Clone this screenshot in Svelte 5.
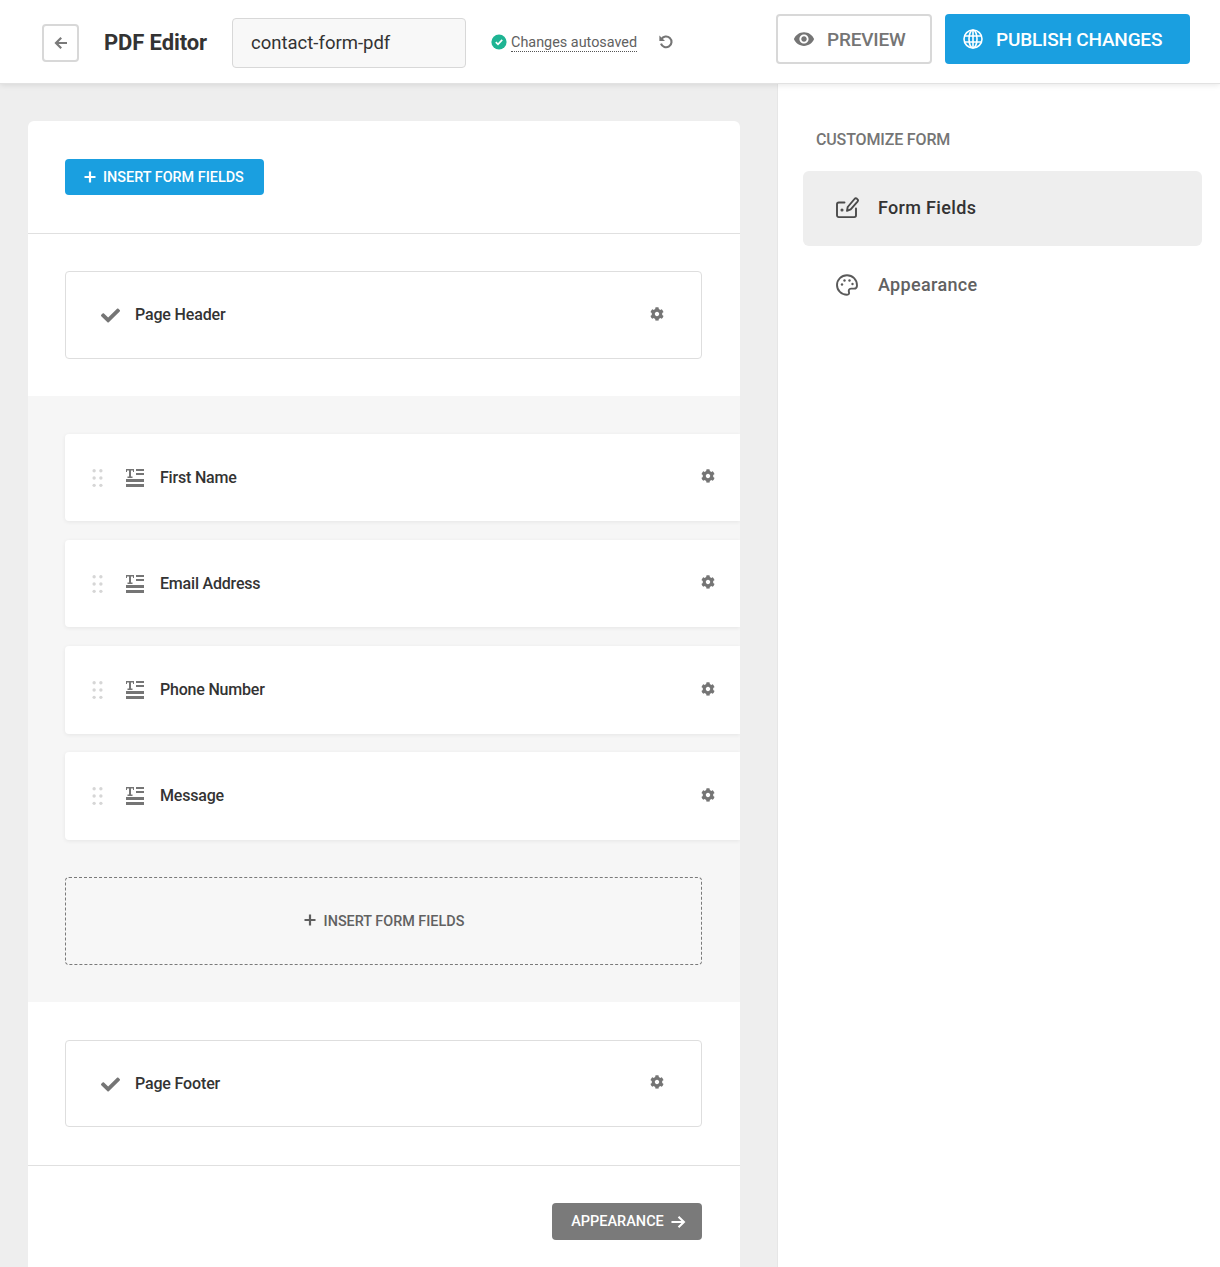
<script>
  const cog = "M487.4 315.7l-42.6-24.6c4.3-23.2 4.3-47 0-70.2l42.6-24.6c4.9-2.8 7.1-8.6 5.5-14-11.1-35.6-30-67.8-54.7-94.6-3.8-4.1-10-5.1-14.8-2.3L380.8 110c-17.9-15.4-38.5-27.3-60.8-35.1V25.8c0-5.6-3.9-10.5-9.4-11.7-36.7-8.2-74.3-7.8-109.2 0-5.5 1.2-9.4 6.1-9.4 11.7V75c-22.2 7.9-42.8 19.8-60.8 35.1L88.7 85.5c-4.9-2.8-11-1.9-14.8 2.3-24.7 26.7-43.6 58.9-54.7 94.6-1.7 5.4.6 11.2 5.5 14L67.3 221c-4.3 23.2-4.3 47 0 70.2l-42.6 24.6c-4.9 2.8-7.1 8.6-5.5 14 11.1 35.6 30 67.8 54.7 94.6 3.8 4.1 10 5.1 14.8 2.3l42.6-24.6c17.9 15.4 38.5 27.3 60.8 35.1v49.2c0 5.6 3.9 10.5 9.4 11.7 36.7 8.2 74.3 7.8 109.2 0 5.5-1.2 9.4-6.1 9.4-11.7v-49.2c22.2-7.9 42.8-19.8 60.8-35.1l42.6 24.6c4.9 2.8 11 1.9 14.8-2.3 24.7-26.7 43.6-58.9 54.7-94.6 1.5-5.5-.7-11.3-5.6-14.1zM256 336c-44.1 0-80-35.9-80-80s35.9-80 80-80 80 35.9 80 80-35.9 80-80 80z";
  const check = "M173.898 439.404l-166.4-166.4c-9.997-9.997-9.997-26.206 0-36.204l36.203-36.204c9.997-9.998 26.207-9.998 36.204 0L192 312.69 432.095 72.596c9.997-9.997 26.207-9.997 36.204 0l36.203 36.204c9.997 9.997 9.997 26.206 0 36.204l-294.4 294.401c-9.998 9.997-26.207 9.997-36.204-.001z";
  const fields = [
    { label: "First Name", h: 87 },
    { label: "Email Address", h: 87 },
    { label: "Phone Number", h: 88 },
    { label: "Message", h: 88 }
  ];
  const dots = [[1.5,1.5],[7.5,1.5],[1.5,8],[7.5,8],[1.5,14.5],[7.5,14.5]];
</script>

{#snippet gear()}
  <svg class="gear" viewBox="0 0 512 512"><path d={cog} fill="#757575" /></svg>
{/snippet}

{#snippet fixedBox(label, cls)}
  <div class="fixed-box {cls}">
    <svg class="check" viewBox="0 0 512 512"><path d={check} fill="#757575" /></svg>
    <span class="row-label">{label}</span>
    {@render gear()}
  </div>
{/snippet}

<div class="page">
  <header class="topbar">
    <button class="back" aria-label="Back">
      <svg viewBox="0 0 16 16" width="16" height="16"><path d="M14 8H3.500M8.200 2.800 3 8l5.200 5.200" fill="none" stroke="#7a7a7a" stroke-width="2.200"/></svg>
    </button>
    <h1>PDF Editor</h1>
    <div class="name-input">contact-form-pdf</div>
    <div class="saved">
      <svg viewBox="0 0 16 16" width="16" height="16"><circle cx="8" cy="8" r="7.600" fill="#1eb493"/><path d="M4.800 8.200 7 10.300l4.200-4.400" fill="none" stroke="#fff" stroke-width="1.700"/></svg>
      <span>Changes autosaved</span>
    </div>
    <svg class="undo" viewBox="0 0 16 16" width="16" height="16"><path d="M3.400 5.200A5.400 5.400 0 1 1 3 9.600" fill="none" stroke="#757575" stroke-width="2.100"/><path d="M1.400 1.400v5.600h5.600z" fill="#757575"/></svg>
    <div class="spacer"></div>
    <button class="preview">
      <svg viewBox="0 0 24 24" width="22" height="22"><path fill="#757575" d="M12 4.500C7 4.500 2.730 7.610 1 12c1.730 4.390 6 7.500 11 7.500s9.270-3.110 11-7.500c-1.730-4.390-6-7.500-11-7.500zM12 17c-2.760 0-5-2.240-5-5s2.240-5 5-5 5 2.240 5 5-2.240 5-5 5zm0-8c-1.660 0-3 1.340-3 3s1.340 3 3 3 3-1.340 3-3-1.340-3-3-3z"/></svg>
      PREVIEW
    </button>
    <button class="publish">
      <svg viewBox="0 0 20 20" width="20" height="20" fill="none" stroke="#fff" stroke-width="1.600"><circle cx="10" cy="10" r="9"/><ellipse cx="10" cy="10" rx="4" ry="9"/><path d="M1.600 7h16.800M1.600 13h16.800M10 1v18"/></svg>
      PUBLISH CHANGES
    </button>
  </header>

  <div class="body">
    <main class="canvas">
      <div class="card">
        <section class="toolbar">
          <button class="insert">
            <svg viewBox="0 0 12 12" width="12" height="12"><path d="M6 .5v11M.5 6h11" stroke="#fff" stroke-width="2.200"/></svg>
            INSERT FORM FIELDS
          </button>
        </section>
        <section class="white-sec">
          {@render fixedBox("Page Header", "")}
        </section>
        <section class="gray-sec">
          <div class="field-list">
            {#each fields as f}
              <div class="field" style="height: {f.h}px">
                <svg class="drag" viewBox="0 0 9 16" width="11" height="18">
                  {#each dots as d}<circle cx={d[0]} cy={d[1]} r="1.500" fill="#d6d6d6" />{/each}
                </svg>
                <svg class="type" viewBox="0 0 18 18" width="18" height="18">
                  <path d="M0 0h8v3H7V1.500H5v6h1.500V9h-5V7.500H3v-6H1V3H0zM10 0h8v2h-8zM10 4h8v2h-8zM0 10h18v3H0zM0 15h18v3H0z" fill="#757575"/>
                </svg>
                <span class="row-label">{f.label}</span>
                {@render gear()}
              </div>
            {/each}
          </div>
          <div class="dashed">
            <svg viewBox="0 0 12 12" width="12" height="12"><path d="M6 .5v11M.5 6h11" stroke="#5f5f5f" stroke-width="2.200"/></svg>
            INSERT FORM FIELDS
          </div>
        </section>
        <section class="white-sec footer-sec">
          {@render fixedBox("Page Footer", "short")}
        </section>
        <section class="actions">
          <button class="next">
            APPEARANCE
            <svg viewBox="0 0 16 14" width="15" height="14"><path d="M.5 7h13M8 1.400 13.800 7 8 12.600" fill="none" stroke="#fff" stroke-width="2.200"/></svg>
          </button>
        </section>
      </div>
    </main>

    <aside class="side">
      <h2>CUSTOMIZE FORM</h2>
      <div class="nav active">
        <svg viewBox="0 0 24 24" width="24" height="24" fill="none" stroke="#4a4a4a" stroke-width="1.900" stroke-linecap="round" stroke-linejoin="round">
          <path d="M9.500 6.500H3.800A1.800 1.800 0 0 0 2 8.300v11a1.800 1.800 0 0 0 1.800 1.800h15.400a1.800 1.800 0 0 0 1.800-1.800v-6.800"/>
          <path d="M12 14.800l.7-3.800 6.800-8a1.800 1.800 0 0 1 2.500-.2l.3.3a1.800 1.800 0 0 1 .2 2.500l-6.800 7.800z"/>
          <circle cx="7" cy="14" r=".6" fill="#4a4a4a"/>
        </svg>
        <span>Form Fields</span>
      </div>
      <div class="nav">
        <svg viewBox="0 0 24 24" width="24" height="24" fill="none" stroke="#5a5a5a" stroke-width="1.900" stroke-linejoin="round">
          <path d="M12 2.200C6.400 2.200 2 6.600 2 12s4.400 9.800 10 9.800c1.800 0 2.400-1.200 2-2.400-.6-1.800-.2-3.800 2-3.800h3c1.800 0 3-1.200 3-3.200 0-5.800-4.400-10.200-10-10.200z"/>
          <circle cx="7" cy="11.500" r="1.200" fill="#5a5a5a" stroke="none"/>
          <circle cx="9.500" cy="7.500" r="1.200" fill="#5a5a5a" stroke="none"/>
          <circle cx="14.500" cy="7.500" r="1.200" fill="#5a5a5a" stroke="none"/>
          <circle cx="17.500" cy="11" r="1.200" fill="#5a5a5a" stroke="none"/>
        </svg>
        <span>Appearance</span>
      </div>
    </aside>
  </div>
</div>

<style>
  :global(body) { margin: 0; background: #fff; }
  .page { width: 1220px; height: 1267px; display: flex; flex-direction: column; overflow: hidden; font-family: Roboto, "Liberation Sans", sans-serif; color: #333; }
  button { font-family: inherit; cursor: pointer; }

  .topbar { height: 84px; box-sizing: border-box; flex: none; display: flex; align-items: center; padding: 0 30px 0 42px; background: #fff; box-shadow: 0 1px 6px rgba(0,0,0,.1); position: relative; z-index: 1; border-bottom: 1px solid #e2e2e2; }
  .back { width: 37px; height: 38px; margin-top: 3px; padding: 0; background: #fff; border: 2px solid #d8d8d8; border-radius: 4px; display: flex; align-items: center; justify-content: center; }
  h1 { margin: 1px 0 0 25px; font-size: 22px; font-weight: 700; letter-spacing: -.1px; color: #333; }
  .name-input { margin: 3px 0 0 25px; width: 234px; height: 50px; box-sizing: border-box; padding-left: 18px; background: #f8f8f8; border: 1px solid #d8d8d8; border-radius: 4px; display: flex; align-items: center; font-size: 18.500px; color: #333; }
  .saved { margin: 3px 0 0 25px; display: flex; align-items: center; gap: 4px; font-size: 14.400px; color: #616161; }
  .saved svg { margin-top: -3px; }
  .saved span { border-bottom: 1px dotted #555; line-height: 17px; }
  .undo { margin: 0 0 0 21px; }
  .spacer { flex: 1; }
  .preview { width: 156px; height: 50px; margin-top: -5px; background: #fff; border: 2px solid #d8d8d8; border-radius: 4px; display: flex; align-items: center; gap: 12px; padding: 0 0 0 15px; font-size: 19px; font-weight: 500; letter-spacing: -.2px; color: #757575; }
  .publish { margin: -5px 0 0 13px; width: 245px; height: 50px; background: #1a9fe0; border: 0; border-radius: 4px; display: flex; align-items: center; gap: 13px; padding: 0 0 0 18px; font-size: 19px; font-weight: 500; letter-spacing: -.2px; color: #fff; }
  .preview, .publish { line-height: 1; }

  .body { flex: 1; display: flex; min-height: 0; }
  .canvas { width: 778px; box-sizing: border-box; background: #eee; padding: 37px 37px 0 28px; border-right: 1px solid #e6e6e6; }
  .card { background: #fff; border-radius: 6px 6px 0 0; width: 712px; height: 100%; overflow: hidden; }
  .toolbar { height: 113px; box-sizing: border-box; padding: 38px 37px 0; border-bottom: 1px solid #e0e0e0; }
  .insert { width: 199px; height: 36px; background: #1a9fe0; border: 0; border-radius: 4px; display: flex; align-items: center; gap: 7px; padding: 0 0 0 19px; color: #fff; font-size: 14.400px; font-weight: 500; }
  .white-sec { height: 162px; box-sizing: border-box; padding: 37px 38px 0 37px; }
  .footer-sec { height: 164px; padding-top: 38px; border-bottom: 1px solid #e0e0e0; }
  .fixed-box { height: 88px; box-sizing: border-box; border: 1px solid #dedede; border-radius: 4px; display: flex; align-items: center; padding: 0 37px 2px 35px; }
  .fixed-box.short { height: 87px; padding-bottom: 0; }
  .fixed-box.short .gear { margin-top: -4px; }
  .check { width: 19px; height: 19px; margin: 2px 15px 0 0; flex: none; }
  .row-label { font-size: 16px; font-weight: 500; letter-spacing: -.15px; color: #333; flex: 1; }
  .gear { width: 14px; height: 14px; flex: none; }

  .gray-sec { height: 606px; box-sizing: border-box; background: #f6f6f6; padding: 38px 0 0 37px; }
  .field-list { display: flex; flex-direction: column; gap: 19px; }
  .field { background: #fff; border-radius: 4px 0 0 4px; box-shadow: 0 1px 4px rgba(0,0,0,.07); display: flex; align-items: center; padding: 0 25px 0 27px; box-sizing: border-box; }
  .field:nth-child(n+3) { padding-bottom: 1px; }
  .field:nth-child(4) { margin-top: -1px; }
  .field .gear { margin-bottom: 3px; }
  .field:nth-child(n+3) .gear { margin-bottom: 1px; }
  .field .row-label { letter-spacing: -.2px; }
  .drag { margin-right: 23px; flex: none; }
  .type { margin-right: 16px; flex: none; }
  .dashed { margin-top: 37px; width: 637px; height: 88px; box-sizing: border-box; border: 1px dashed #7a7a7a; border-radius: 4px; background: #f7f7f7; display: flex; align-items: center; justify-content: center; gap: 8px; padding-left: 1px; font-size: 14.400px; font-weight: 500; color: #616161; }
  .dashed svg { margin-top: -2px; }

  .actions { display: flex; justify-content: flex-end; padding: 37px 38px 0 0; }
  .next { width: 150px; height: 37px; background: #7a7a7a; border: 0; border-radius: 4px; color: #fff; font-size: 14.500px; font-weight: 500; display: flex; align-items: center; justify-content: center; gap: 7px; padding: 0 0 0 3px; }

  .side { flex: 1; padding: 46px 18px 0 25px; background: #fff; }
  h2 { margin: 0 0 22px 13px; font-size: 16px; line-height: 19px; font-weight: 500; color: #757575; letter-spacing: -.15px; }
  .nav { height: 75px; box-sizing: border-box; border-radius: 6px; display: flex; align-items: center; gap: 19px; padding-left: 32px; font-size: 18px; font-weight: 500; letter-spacing: .33px; color: #616161; }
  .nav + .nav { margin-top: 1px; height: 76px; padding-bottom: 1px; }
  .nav.active { background: #eee; color: #333; padding-bottom: 2px; }
</style>
